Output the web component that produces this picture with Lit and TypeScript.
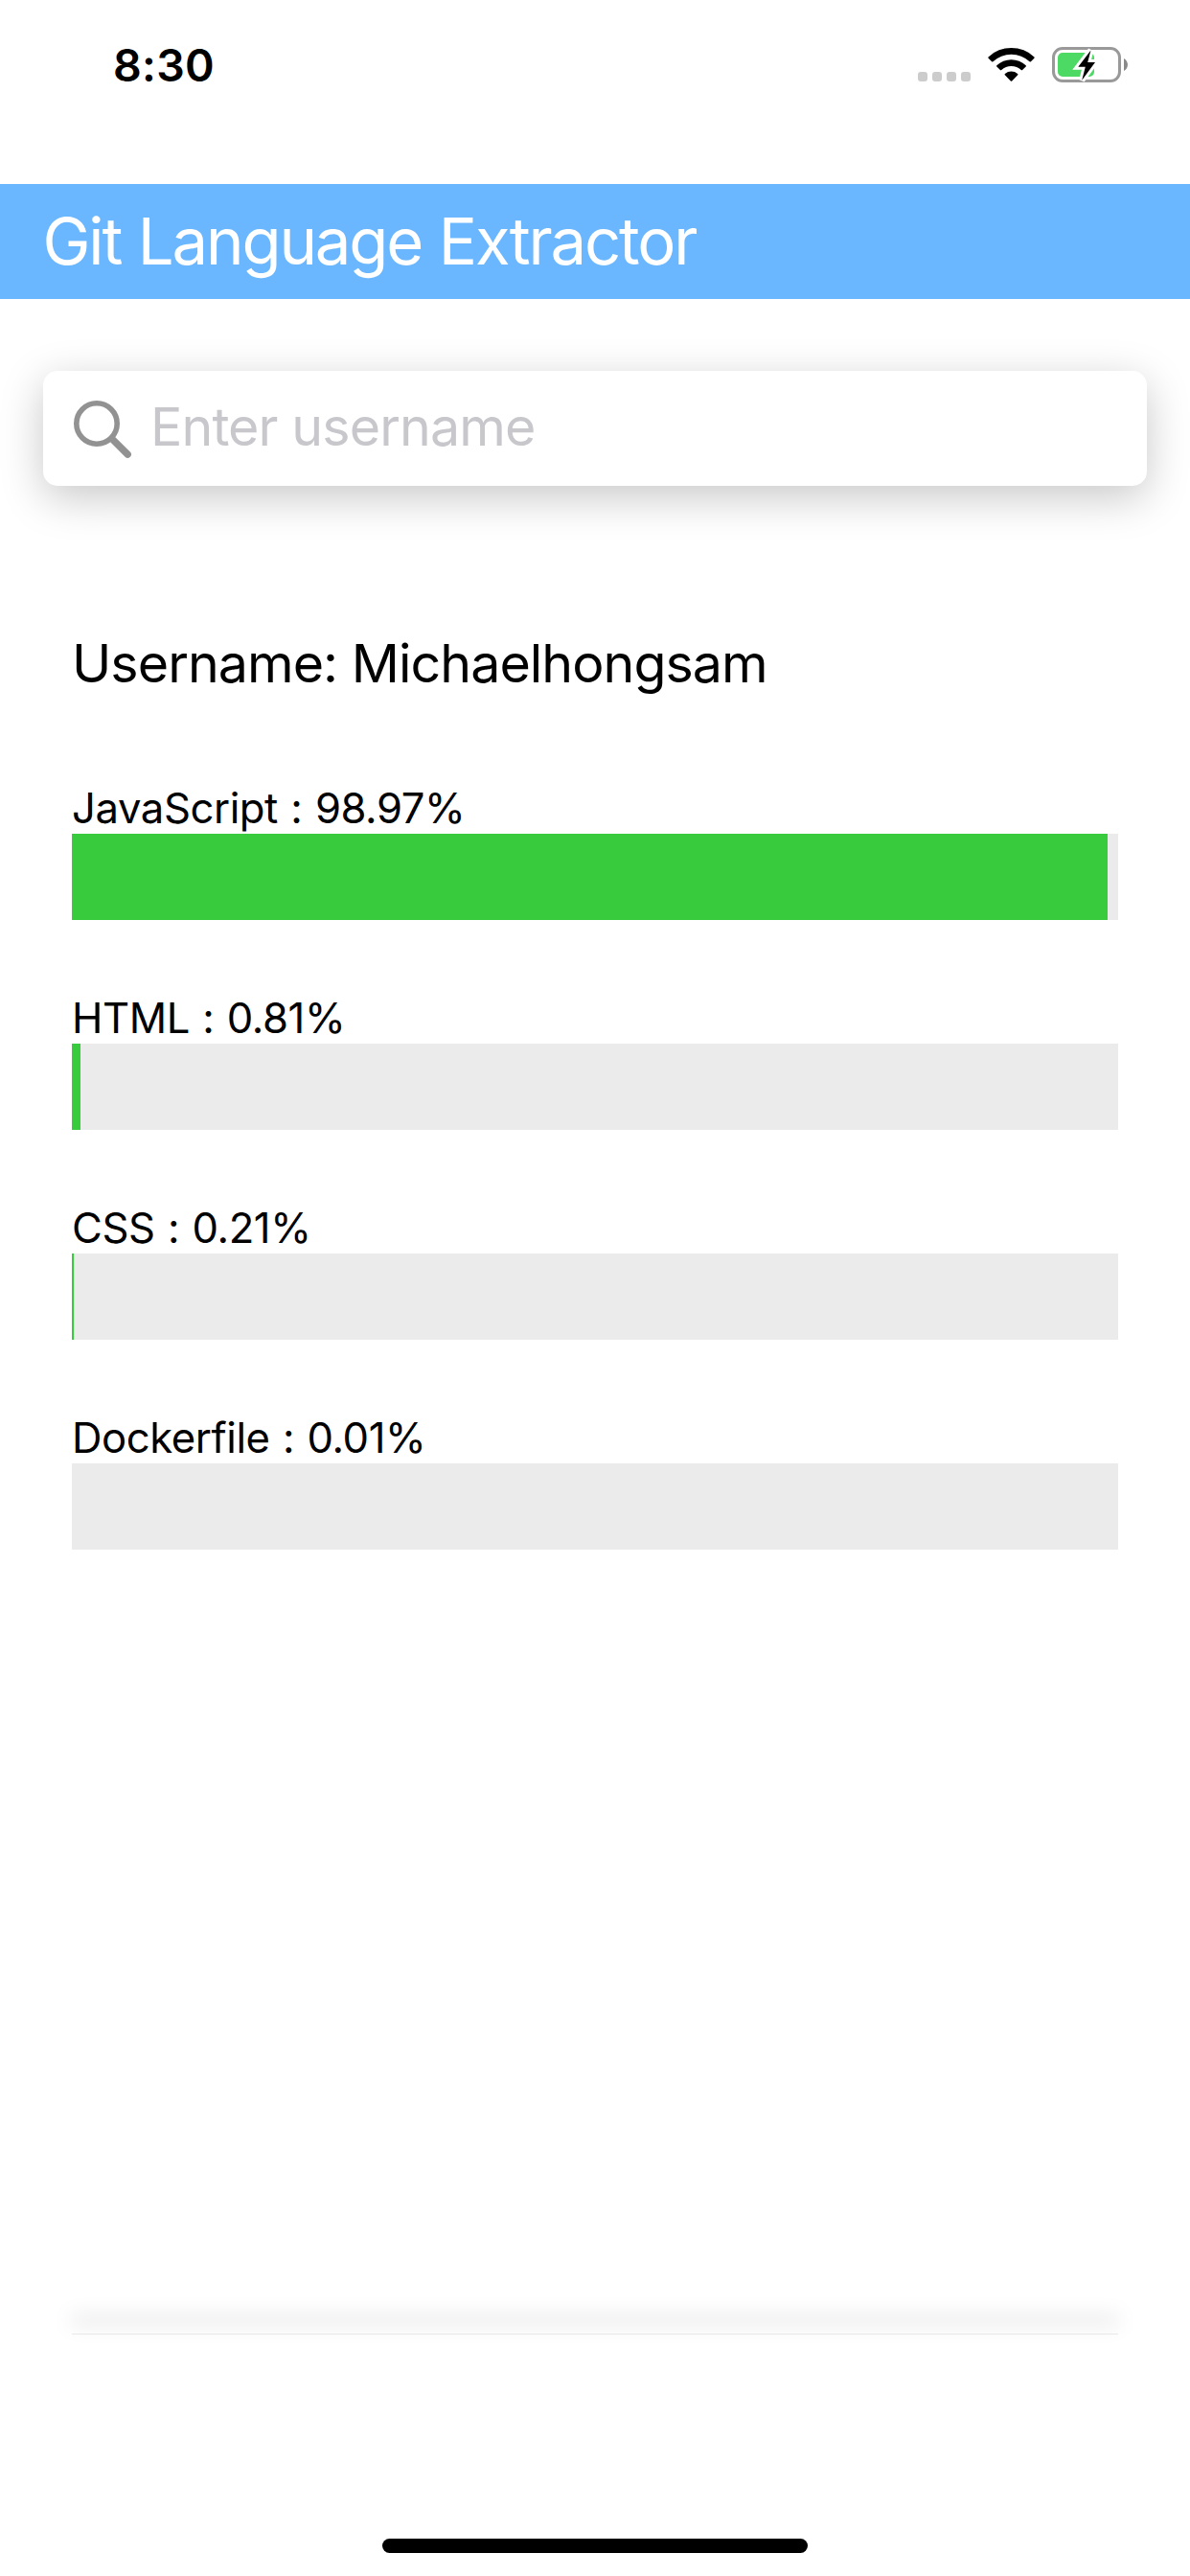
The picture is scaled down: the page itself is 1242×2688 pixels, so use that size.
import { LitElement, html, css } from "lit";
import { customElement, property } from "lit/decorators.js";

interface Language {
  name: string;
  percent: string;
}

const LANGUAGES: Language[] = [
  { name: "JavaScript", percent: "98.97" },
  { name: "HTML", percent: "0.81" },
  { name: "CSS", percent: "0.21" },
  { name: "Dockerfile", percent: "0.01" },
];

@customElement("status-bar")
export class StatusBar extends LitElement {
  static styles = css`
    :host {
      display: flex;
      justify-content: space-between;
      align-items: flex-start;
      box-sizing: border-box;
      height: 192px;
      padding: 41px 65px 0 118px;
    }
    .time {
      font-size: 46.5px;
      font-weight: 600;
      line-height: 54px;
      letter-spacing: 0.27px;
    }
    .icons {
      display: flex;
      margin-top: 8px;
    }
    .cell {
      width: 55px;
      height: 37px;
    }
    .wifi {
      width: 49px;
      height: 37px;
      margin: 0 18px;
    }
    .battery {
      width: 79px;
      height: 37px;
      overflow: visible;
    }
  `;

  render() {
    return html`
      <span class="time">8:30</span>
      <div class="icons">
        <svg class="cell" viewBox="0 0 55 37" fill="#cccccc">
          <rect x="0" y="26" width="10" height="10" rx="3" />
          <rect x="15" y="26" width="10" height="10" rx="3" />
          <rect x="30" y="26" width="10" height="10" rx="3" />
          <rect x="45" y="26" width="10" height="10" rx="3" />
        </svg>
        <svg class="wifi" viewBox="0 0 49 37">
          <path d="M0.6 10.4A34.8 34.8 0 0 1 48.4 10.4Q49.1 11.1 48.4 11.8L44.9 15.3Q44.3 15.9 43.6 15.3A28 28 0 0 0 5.4 15.3Q4.7 15.9 4.1 15.3L0.6 11.8Q-0.1 11.1 0.6 10.4Z" />
          <path d="M9.3 19.2A22.3 22.3 0 0 1 39.7 19.2Q40.3 19.9 39.7 20.5L36.1 24.1Q35.5 24.6 34.8 24A15.5 15.5 0 0 0 14.2 24Q13.5 24.6 12.9 24.1L9.3 20.5Q8.7 19.9 9.3 19.2Z" />
          <path d="M17.9 27.9A10.2 10.2 0 0 1 31.1 27.9Q31.9 28.6 31.2 29.3L25.2 35.4Q24.5 36 23.8 35.4L17.8 29.3Q17.1 28.6 17.9 27.9Z" />
        </svg>
        <svg class="battery" viewBox="0 0 79 37">
          <rect x="1.5" y="1.5" width="69" height="34" rx="9.5" fill="none" stroke="#999999" stroke-width="3" />
          <path d="M75 12C80.3 15 80.3 22 75 25Z" fill="#8a8a8a" />
          <rect x="6" y="6" width="38" height="25" rx="5" fill="#4cd964" />
          <path d="M40.5 3.4L27.3 20.8H34.8L31.2 34.8L45 15.9H37.2Z" fill="#000" stroke="#fff" stroke-width="6" paint-order="stroke" />
        </svg>
      </div>
    `;
  }
}

@customElement("search-field")
export class SearchField extends LitElement {
  static styles = css`
    :host {
      display: flex;
      align-items: center;
      box-sizing: border-box;
      height: 120px;
      margin: 75px 45px 0;
      padding-left: 31px;
      border-radius: 15px;
      background: #fff;
      box-shadow: 0 12px 45px rgba(0, 0, 0, 0.22);
    }
    .glass {
      width: 62px;
      height: 64px;
      flex: none;
    }
    .hint {
      margin: -4px 0 0 19px;
      color: #c7c7cc;
      font-size: 55.5px;
      line-height: 68px;
      letter-spacing: -0.88px;
    }
  `;

  render() {
    return html`
      <svg class="glass" viewBox="0 0 62 64" fill="none" stroke="#929292">
        <circle cx="25" cy="27" r="21.2" stroke-width="5.6" />
        <path d="M41 43L57.2 59.2" stroke-width="7.4" stroke-linecap="round" />
      </svg>
      <span class="hint">Enter username</span>
    `;
  }
}

@customElement("language-row")
export class LanguageRow extends LitElement {
  @property() name = "";
  @property() percent = "0";

  static styles = css`
    :host {
      display: block;
    }
    .label {
      height: 54px;
      font-size: 43.6px;
      line-height: 56px;
      letter-spacing: -0.4px;
      word-spacing: 1.5px;
      white-space: pre;
    }
    .track {
      height: 90px;
      background: #ebebeb;
    }
    .fill {
      height: 90px;
      background: #37cb3d;
    }
  `;

  render() {
    const width = Math.round((1092 * Number(this.percent)) / 100);
    return html`
      <div class="label">${this.name} : ${this.percent}%</div>
      <div class="track"><div class="fill" style="width:${width}px"></div></div>
    `;
  }
}

@customElement("app-root")
export class AppRoot extends LitElement {
  static styles = css`
    :host {
      display: flex;
      flex-direction: column;
      box-sizing: border-box;
      width: 1242px;
      height: 2688px;
      overflow: hidden;
      background: #fff;
      color: #000;
      font-family: Inter, "Liberation Sans", sans-serif;
    }
    .title {
      height: 120px;
      padding-left: 44.5px;
      background: #6ab7ff;
      color: #fff;
      font-size: 67px;
      line-height: 120px;
      letter-spacing: -2.16px;
      word-spacing: 1px;
    }
    .results {
      display: flex;
      flex-direction: column;
      gap: 75px;
      box-sizing: border-box;
      height: 1928px;
      margin: 0 75px;
      padding-top: 151px;
    }
    .user {
      margin-bottom: 15px;
      font-size: 55.5px;
      line-height: 68px;
      letter-spacing: -0.94px;
    }
    .divider {
      position: relative;
      height: 1px;
      margin: 0 75px;
      flex: none;
      background: #ebebeb;
    }
    .divider::before {
      content: "";
      position: absolute;
      inset: -19px 0 auto;
      height: 10px;
      background: rgba(0, 0, 0, 0.1);
      filter: blur(10px);
    }
    .home {
      width: 444px;
      height: 15px;
      margin: auto auto 24px;
      border-radius: 8px;
      background: #000;
    }
  `;

  render() {
    return html`
      <status-bar></status-bar>
      <div class="title">Git Language Extractor</div>
      <search-field></search-field>
      <div class="results">
        <div class="user">Username: Michaelhongsam</div>
        ${LANGUAGES.map(
          (l) => html`<language-row .name=${l.name} .percent=${l.percent}></language-row>`
        )}
      </div>
      <div class="divider"></div>
      <div class="home"></div>
    `;
  }
}
